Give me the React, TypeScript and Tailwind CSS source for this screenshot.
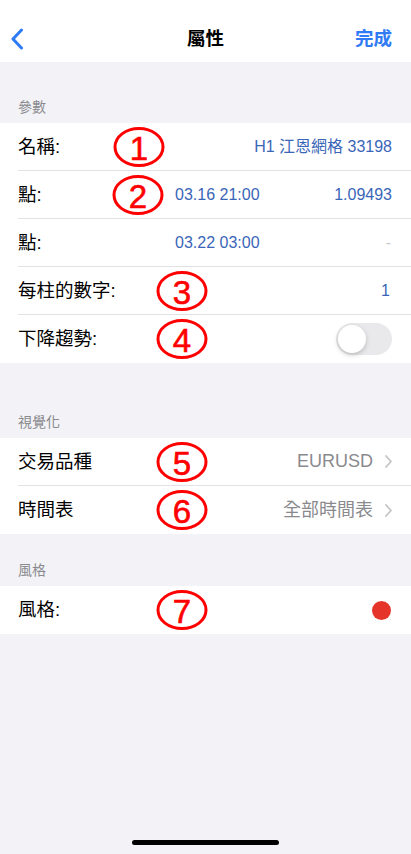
import React from "react";

const FONT = "font-['Liberation_Sans','Noto_Sans_CJK_TC',sans-serif]";

function Mark({ n, left }: { n: string; left: string }) {
  return (
    <svg
      className={`absolute top-1/2 -translate-y-1/2 ${left}`}
      width="54"
      height="44"
      viewBox="0 0 54 44"
    >
      <ellipse cx="27" cy="22" rx="24" ry="18.5" fill="none" stroke="#ff0000" strokeWidth="3" />
      <text
        x="27"
        y="23"
        textAnchor="middle"
        dominantBaseline="central"
        fontSize="33"
        fontFamily="Liberation Sans, sans-serif"
        fill="#ff0000"
        stroke="#ff0000"
        strokeWidth="0.6"
      >
        {n}
      </text>
    </svg>
  );
}

function Row({ children, last }: { children: React.ReactNode; last?: boolean }) {
  return (
    <div className="relative bg-white pl-[18px]">
      <div
        className={`relative flex h-[48px] items-center pr-[19px] ${
          last ? "" : "border-b border-[#e2e2e6]"
        }`}
      >
        {children}
      </div>
    </div>
  );
}

function Section({ title, h }: { title: string; h: string }) {
  return (
    <div className={`flex ${h} items-end px-[18px] pb-[7px]`}>
      <span className="text-[14px] leading-[18px] text-[#8a8a8e]">{title}</span>
    </div>
  );
}

function Chevron() {
  return (
    <svg width="7" height="13" viewBox="0 0 7 13" className="ml-[12px]">
      <path d="M1 1l5 5.5L1 12" fill="none" stroke="#c4c4c7" strokeWidth="1.8" strokeLinecap="round" strokeLinejoin="round" />
    </svg>
  );
}

export default function App() {
  return (
    <div className={`relative flex h-[854px] w-[411px] flex-col overflow-hidden bg-[#f2f2f7] ${FONT}`}>
      {/* Top bar */}
      <div className="flex h-[62px] items-center bg-white px-[10px] pt-[16px]">
        <div className="w-[80px]">
          <svg width="14" height="22" viewBox="0 0 14 22">
            <path d="M11.5 2L3 11l8.5 9" fill="none" stroke="#2f7bf5" strokeWidth="3" strokeLinecap="round" strokeLinejoin="round" />
          </svg>
        </div>
        <div className="flex-1 text-center text-[18.5px] font-bold text-black">屬性</div>
        <div className="w-[80px] pr-[9px] text-right text-[18.5px] font-semibold text-[#2f7bf5]">完成</div>
      </div>

      <Section title="參數" h="h-[61px]" />
      <Row>
        <span className="text-[18.5px] text-black">名稱:</span>
        <Mark n="1" left="left-[94px]" />
        <span className="ml-auto text-[16px] text-[#3a66b8]">H1 江恩網格 33198</span>
      </Row>
      <Row>
        <span className="w-[157px] text-[18.5px] text-black">點:</span>
        <Mark n="2" left="left-[93px]" />
        <span className="text-[16px] text-[#3a66b8]">03.16 21:00</span>
        <span className="ml-auto text-[16px] text-[#3a66b8]">1.09493</span>
      </Row>
      <Row>
        <span className="w-[157px] text-[18.5px] text-black">點:</span>
        <span className="text-[16px] text-[#3a66b8]">03.22 03:00</span>
        <span className="ml-auto pr-[1px] text-[16px] text-[#c8c8cc]">-</span>
      </Row>
      <Row>
        <span className="text-[18.5px] text-black">每柱的數字:</span>
        <Mark n="3" left="left-[137px]" />
        <span className="ml-auto pr-[2px] text-[16px] text-[#3a66b8]">1</span>
      </Row>
      <Row last>
        <span className="text-[18.5px] text-black">下降趨勢:</span>
        <Mark n="4" left="left-[137px]" />
        <div className="ml-auto flex h-[32px] w-[56px] items-center rounded-full bg-[#e9e9eb] p-[2px]">
          <div className="h-[28px] w-[28px] rounded-full bg-white shadow-[0_2px_5px_rgba(0,0,0,0.2)]" />
        </div>
      </Row>

      <Section title="視覺化" h="h-[75px]" />
      <Row>
        <span className="text-[18.5px] text-black">交易品種</span>
        <Mark n="5" left="left-[137px]" />
        <span className="ml-auto text-[18px] text-[#8a8a8e]">EURUSD</span>
        <Chevron />
      </Row>
      <Row last>
        <span className="text-[18.5px] text-black">時間表</span>
        <Mark n="6" left="left-[137px]" />
        <span className="ml-auto text-[18px] text-[#8a8a8e]">全部時間表</span>
        <Chevron />
      </Row>

      <Section title="風格" h="h-[52px]" />
      <Row last>
        <span className="text-[18.5px] text-black">風格:</span>
        <Mark n="7" left="left-[137px]" />
        <div className="ml-auto mr-[1px] h-[19px] w-[19px] rounded-full bg-[#e5352b]" />
      </Row>

      <div className="flex-1" />
      <div className="flex justify-center pb-[9px]">
        <div className="h-[5px] w-[147px] rounded-full bg-black" />
      </div>
    </div>
  );
}
